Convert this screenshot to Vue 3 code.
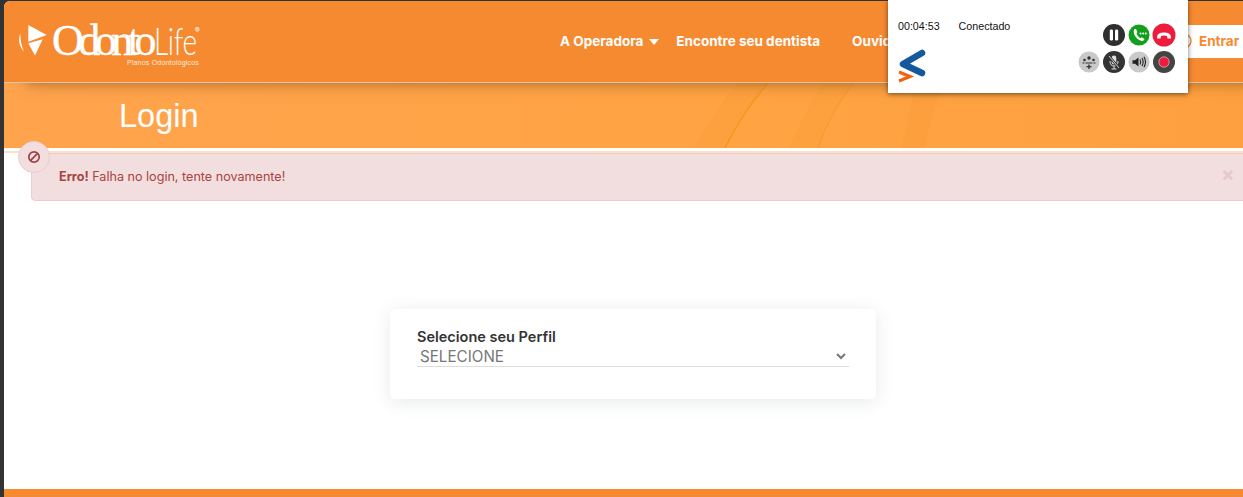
<script setup>
const navItems = ['Encontre seu dentista', 'Ouvidoria']
</script>

<template>
  <div class="page">
    <div class="sheet">
      <header class="top">
        <a class="logo">
          <svg class="mark" width="30" height="31" viewBox="0 0 30 31">
            <path d="M10.3 0 L28.7 10 L10.3 16.7 Z M10.3 18.3 L24.7 14.3 L17 30.5 Z" fill="#fff" />
            <path d="M2.4 8 Q-1.5 18 6 26.7 Q2 18 2.4 8 Z" fill="#fff" />
          </svg>
          <div class="word">
            <div class="name"><span class="odonto">Odonto</span><span class="life">Life</span><span class="reg">®</span></div>
            <div class="sub">Planos Odontológicos</div>
          </div>
        </a>
        <nav class="nav">
          <span class="nav-item first">A Operadora<i class="caret"></i></span>
          <span v-for="n in navItems" :key="n" class="nav-item">{{ n }}</span>
        </nav>
        <div class="enter">
          <svg width="16" height="16" viewBox="0 0 16 16"><circle cx="8" cy="8" r="7" fill="none" stroke="#f68a31" stroke-width="1.4" /></svg>
          <span>Entrar</span>
        </div>
      </header>

      <section class="banner">
        <svg class="swoosh" width="1239" height="65" viewBox="0 0 1239 65">
          <path d="M690 65 Q712 28 733 0 L764 0 Q738 30 721 65 Z" fill="#f99a35" opacity=".3" />
          <path d="M721 65 Q738 30 764 0" fill="none" stroke="#f7941d" stroke-width="1.3" />
          <path d="M785 65 Q802 28 818 0 L849 0 Q826 30 814 65 Z" fill="#f99a35" opacity=".25" />
          <path d="M814 65 Q826 30 849 0" fill="none" stroke="#f6932a" stroke-width=".8" />
          <path d="M898 65 Q904 28 913 0 L939 0 Q928 30 921 65 Z" fill="#f99a35" opacity=".35" />
        </svg>
        <h1 class="title">Login</h1>
      </section>
      <div class="rule"></div>

      <div class="alert">
        <span class="alert-icon">
          <svg width="14" height="14" viewBox="0 0 14 14"><circle cx="7" cy="7" r="5.2" fill="none" stroke="#a23e48" stroke-width="1.7" /><path d="M3.4 10.6 L10.6 3.4" stroke="#a23e48" stroke-width="1.7" /></svg>
        </span>
        <p class="alert-text"><b>Erro!</b> Falha no login, tente novamente!</p>
        <span class="close">×</span>
      </div>

      <div class="card">
        <label class="label">Selecione seu Perfil</label>
        <div class="select">
          <span>SELECIONE</span>
          <svg width="10" height="7" viewBox="0 0 10 7"><path d="M1 1 L5 5 L9 1" fill="none" stroke="#777" stroke-width="2" /></svg>
        </div>
      </div>

      <footer class="foot"></footer>
    </div>

    <aside class="phone">
      <div class="phone-left">
        <div class="status"><span>00:04:53</span><span>Conectado</span></div>
        <svg class="brand" width="28" height="34" viewBox="0 0 28 34">
          <path d="M24 4 L5 15 L24 24" fill="none" stroke="#14589f" stroke-width="6.5" stroke-linecap="round" stroke-linejoin="round" />
          <path d="M1 23 L12 27.5 L1 32" fill="none" stroke="#f0640f" stroke-width="3.2" />
        </svg>
      </div>
      <div class="phone-right">
        <div class="row top-row">
          <svg class="btn" width="24" height="24" viewBox="0 0 24 24"><circle cx="12" cy="12" r="11" fill="#2f2f2f" /><rect x="7.8" y="6.5" width="3.2" height="11" rx="1.2" fill="#fff" /><rect x="13" y="6.5" width="3.2" height="11" rx="1.2" fill="#fff" /></svg>
          <svg class="btn" width="24" height="24" viewBox="0 0 24 24"><circle cx="12" cy="12" r="10.5" fill="#12a01c" /><path d="M7.5 6 Q6 8 7.5 12 Q10 17 15 18 Q17 18 17.5 16 L14.8 14.2 L13.3 15.2 Q10.5 13.5 9.5 10.5 L10.4 9.2 L9 6 Z" fill="#fff" /><circle cx="13.5" cy="10.5" r="1" fill="#fff" /><circle cx="16.2" cy="10.5" r="1" fill="#fff" /><circle cx="18.8" cy="10.5" r="1" fill="#fff" /></svg>
          <svg class="btn" width="24" height="24" viewBox="0 0 24 24"><circle cx="12" cy="12" r="11.5" fill="#ee1c3c" /><path d="M5 14.5 Q5 9.5 12 9.5 Q19 9.5 19 14.5 L19 15.5 L15.5 15.5 L15 13 Q12 12 9 13 L8.5 15.5 L5 15.5 Z" fill="#fff" /></svg>
        </div>
        <div class="row bottom-row">
          <svg class="btn" width="22" height="24" viewBox="0 0 22 24"><circle cx="11" cy="12" r="10.5" fill="#c9c9c9" /><circle cx="11" cy="8" r="1.7" fill="#333" /><circle cx="6.5" cy="10" r="1.3" fill="#333" /><circle cx="15.5" cy="10" r="1.3" fill="#333" /><path d="M7.5 12.5 H14.5 V13.5 H7.5 Z M4.5 12.5 H6.5 V13.5 H4.5 Z M15.5 12.5 H17.5 V13.5 H15.5 Z M10.3 14.5 H11.7 V16 H13.5 V17.2 H11.7 V19 H10.3 V17.2 H8.5 V16 H10.3 Z" fill="#333" /></svg>
          <svg class="btn" width="24" height="24" viewBox="0 0 24 24"><circle cx="12" cy="12" r="11" fill="#333" /><rect x="9.7" y="5.5" width="4.6" height="9" rx="2.3" fill="#ddd" /><path d="M8 11 Q8 16 12 16 Q16 16 16 11 M12 16 V19 M9.5 19 H14.5" fill="none" stroke="#ddd" stroke-width="1" /><path d="M7 6 L17 18" stroke="#333" stroke-width="2.4" /><path d="M7 6 L17 18" stroke="#ddd" stroke-width=".9" /></svg>
          <svg class="btn" width="22" height="24" viewBox="0 0 22 24"><circle cx="11" cy="12" r="10.5" fill="#c9c9c9" /><path d="M4.5 10.3 H7 L10.5 7.5 V16.5 L7 13.7 H4.5 Z" fill="#222" /><path d="M12 9.5 Q13.5 12 12 14.5 M14 8 Q16.3 12 14 16 M16 6.8 Q19 12 16 17.2" fill="none" stroke="#222" stroke-width="1.1" /></svg>
          <svg class="btn" width="24" height="24" viewBox="0 0 24 24"><circle cx="12" cy="12" r="11" fill="#444" /><circle cx="12" cy="12" r="5.2" fill="#ee1c3c" stroke="#ddd" stroke-width=".6" /></svg>
        </div>
      </div>
    </aside>
  </div>
</template>

<style scoped>
.page {
  position: relative;
  height: 496px;
  padding: 1px 0 0 4px;
  background: #333;
  overflow: hidden;
  font-family: Inter, "Liberation Sans", sans-serif;
}
.sheet {
  height: 496px;
  display: flex;
  flex-direction: column;
  overflow: hidden;
  background: #fff;
  border-top-left-radius: 6px;
}
.top {
  height: 81px;
  flex: none;
  display: flex;
  align-items: center;
  background: #f68a31;
  border-bottom: 1px solid #d9c4b0;
  padding-left: 14px;
  position: relative;
  z-index: 1;
  box-shadow: 16px 6px 14px -6px rgba(90, 50, 10, .55);
}
.logo {
  display: flex;
  align-items: flex-start;
  align-self: flex-start;
  flex: none;
  width: 180px;
  margin-top: 25px;
  color: #fff;
}
.mark { flex: none; margin-top: -1px; }
.word { margin-left: 4px; width: 147px; flex: none; margin-top: -4px; }
.name {
  display: flex;
  align-items: baseline;
  height: 36px;
  white-space: nowrap;
}
.odonto {
  font-family: "Liberation Serif", serif;
  font-size: 44px;
  letter-spacing: -5.5px;
  line-height: 36px;
  -webkit-text-stroke: .4px #fff;
}
.life {
  display: inline-block;
  width: 41px;
  flex: none;
  font-family: Lato, "Liberation Sans", sans-serif;
  font-size: 38px;
  font-weight: 300;
  letter-spacing: -.5px;
  line-height: 36px;
  margin-left: 3px;
  transform: scaleX(.74);
  transform-origin: left center;
}
.reg { font-size: 7px; line-height: 8px; align-self: flex-start; margin: 5px 0 0 0; }
.sub {
  font-size: 7px;
  font-family: "Liberation Sans", sans-serif;
  letter-spacing: .2px;
  text-align: right;
  margin-top: 1px;
  white-space: nowrap;
  color: #ffe9d6;
}
.nav {
  display: flex;
  margin-left: 362px;
  margin-top: -1px;
  white-space: nowrap;
  color: #fff;
  font-size: 13.5px;
  font-weight: 700;
  width: 606px;
  flex: none;
}
.nav-item { margin-right: 32px; }
.nav-item.first { margin-right: 17px; display: flex; align-items: center; }
.caret {
  width: 0;
  height: 0;
  margin: 2px 0 0 6px;
  border: 5px solid transparent;
  border-top: 6px solid #fff;
  border-bottom: 0;
}
.enter {
  display: flex;
  align-items: center;
  gap: 7px;
  height: 33px;
  padding-left: 10px;
  flex: 1;
  background: #fff;
  border-radius: 6px 0 0 6px;
  color: #f68a31;
  font-size: 13.5px;
  font-weight: 700;
  margin-top: -1px;
}
.banner {
  position: relative;
  flex: none;
  height: 65px;
  background: linear-gradient(90deg, #ffa44d, #ffa343 60%, #fea03f);
  display: flex;
  align-items: center;
  overflow: hidden;
}
.swoosh { position: absolute; left: 0; top: 0; }
.title {
  position: relative;
  margin: 0 0 0 115px;
  color: #fff;
  font-family: "Liberation Sans", sans-serif;
  font-size: 32.5px;
  font-weight: 400;
  line-height: 38px;
}
.rule {
  flex: none;
  height: 5px;
  background: linear-gradient(#fff 0 3px, #ffe0c0 3px);
}
.alert {
  position: relative;
  flex: none;
  box-sizing: border-box;
  height: 48px;
  width: 1230px;
  margin-left: 27px;
  padding-bottom: 2px;
  display: flex;
  align-items: center;
  background: #f2dede;
  border: 1px solid #ebccd1;
  border-radius: 4px;
  color: #a94442;
  font-size: 12.6px;
}
.alert-icon {
  position: absolute;
  left: -14px;
  top: -13px;
  width: 32px;
  height: 32px;
  box-sizing: border-box;
  border: 1px solid #ebccd1;
  border-radius: 50%;
  background: #f2dede;
  display: flex;
  align-items: center;
  justify-content: center;
}
.alert-text { margin: 0 0 0 27px; }
.close {
  position: absolute;
  left: 1189px;
  top: 9px;
  font-size: 20px;
  line-height: 22px;
  font-weight: 700;
  color: #e6c8cd;
}
.card {
  flex: none;
  box-sizing: border-box;
  width: 486px;
  height: 90px;
  margin: 108px 0 0 386px;
  padding: 19px 27px 0;
  background: #fff;
  border-radius: 5px;
  box-shadow: 0 3px 18px rgba(60, 70, 90, .12);
}
.label {
  display: block;
  font-size: 14.5px;
  font-weight: 600;
  line-height: 17px;
  color: #333;
}
.select {
  display: flex;
  align-items: center;
  justify-content: space-between;
  height: 20px;
  padding: 1px 3px 0;
  border-bottom: 1px solid #ddd;
  font-size: 15.2px;
  color: #777;
}
.foot {
  flex: none;
  height: 8px;
  margin-top: 90px;
  background: #f68a31;
}
.phone {
  position: absolute;
  left: 888px;
  top: 0;
  z-index: 5;
  box-sizing: border-box;
  width: 300px;
  height: 93px;
  background: #fff;
  box-shadow: 0 1px 5px rgba(0, 0, 0, .55);
  display: flex;
  justify-content: space-between;
  padding: 0 12px 0 10px;
}
.phone-left { display: flex; flex-direction: column; }
.status {
  display: flex;
  gap: 19px;
  margin-top: 20px;
  font-family: "Liberation Sans", sans-serif;
  font-size: 10.7px;
  line-height: 12px;
  color: #111;
}
.brand { margin-top: 17px; }
.phone-right { display: flex; flex-direction: column; padding-top: 23px; }
.row { display: flex; justify-content: flex-end; align-items: center; gap: 1px; height: 24px; margin-bottom: 3px; }
.bottom-row { gap: 2px; }
.btn { flex: none; }
</style>

<style>
html, body { margin: 0; background: #333; overflow: hidden; }
</style>
